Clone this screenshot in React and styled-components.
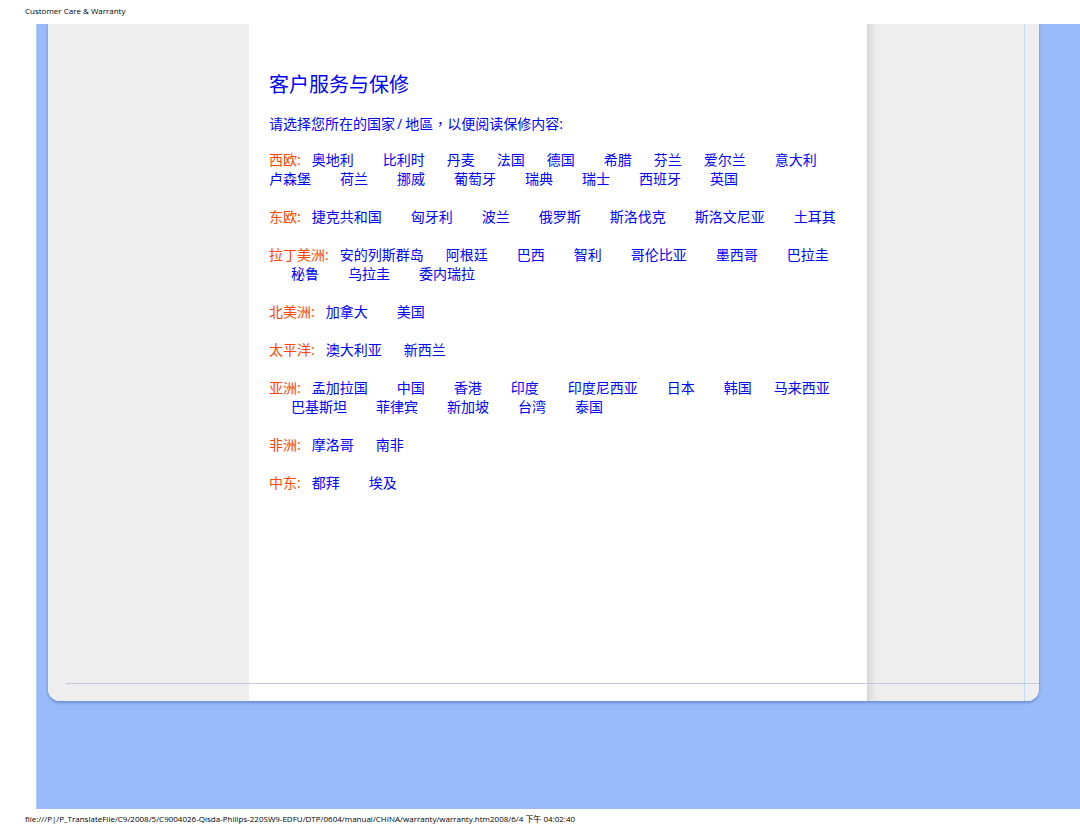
import React from 'react';
import styled, { createGlobalStyle } from 'styled-components';

const GlobalStyle = createGlobalStyle`
  * { box-sizing: border-box; }
  body {
    margin: 0;
    background: #fff;
    font-family: "Open Sans", "Noto Sans CJK SC", sans-serif;
  }
`;

const Page = styled.div`
  display: flex;
  flex-direction: column;
  min-height: 100vh;
`;

const PrintLine = styled.div`
  padding: ${(p) => (p.$foot ? '3px 25px 8px' : '4px 25px 6px')};
  font-size: 8px;
  line-height: 14px;
  color: #000;
`;

const Stage = styled.div`
  flex: 1;
  margin-left: 36px;
  padding: 0 41px 108px 11px;
  background: #99bbf9;
  border-left: 1px solid #b4c9fb;
  overflow: hidden;
`;

const Panel = styled.div`
  position: relative;
  display: grid;
  grid-template-columns: 201px minmax(0, 1fr) 157px 15px;
  min-height: 677px;
  background: #fff;
  border-radius: 0 0 12px 12px;
  box-shadow: 0 2px 3px #6f8fd6, 0 0 2px #7c9ce0;
  overflow: hidden;

  &::after {
    content: "";
    position: absolute;
    left: 18px;
    right: 0;
    bottom: 17px;
    height: 1px;
    background: #bccbe0;
  }
`;

const LeftRail = styled.div`
  background: #eee;
`;

const RightRail = styled.div`
  background: linear-gradient(to right, #d6d6d6 0, #e2e2e2 4px, #eee 10px);
`;

const RightEdge = styled.div`
  background: #eee;
  border-left: 1px solid #c2dcf8;
`;

const Content = styled.main`
  padding: 47px 20px 0;
  color: #00f;
  font-size: 14px;
  line-height: 19px;
`;

const Title = styled.h1`
  margin: 0;
  font-size: 20px;
  font-weight: 400;
  line-height: 28px;
`;

const Intro = styled.p`
  margin: 15px 0 17px;
`;

const Slash = styled.span`
  margin: 0 3px 0 2px;
`;

const Comma = styled.span`
  font-family: "Noto Sans CJK TC", sans-serif;
`;

const Region = styled.section`
  margin-bottom: 19px;
`;

const Line = styled.div`
  display: flex;
  white-space: nowrap;
  padding-left: ${(p) => (p.$indent ? '22px' : '0')};
`;

const RegionName = styled.h2`
  margin: 0 11px 0 0;
  font-size: 14px;
  font-weight: 400;
  line-height: 19px;
  color: #ff4500;
`;

const Country = styled.a`
  margin-right: ${(p) => (p.$tight ? '22px' : '29px')};
  color: #00f;
  text-decoration: none;

  &:last-child { margin-right: 0; }
`;

/* A trailing "-" marks a country followed by the narrower gap. */
const regions = [
  {
    name: '西欧',
    lines: [
      '奥地利 比利时- 丹麦- 法国- 德国 希腊- 芬兰- 爱尔兰 意大利',
      '卢森堡 荷兰 挪威 葡萄牙 瑞典 瑞士 西班牙 英国',
    ],
  },
  { name: '东欧', lines: ['捷克共和国 匈牙利 波兰 俄罗斯 斯洛伐克 斯洛文尼亚 土耳其'] },
  {
    name: '拉丁美洲',
    indent: true,
    lines: ['安的列斯群岛- 阿根廷 巴西 智利 哥伦比亚 墨西哥 巴拉圭', '秘鲁 乌拉圭 委内瑞拉'],
  },
  { name: '北美洲', lines: ['加拿大 美国'] },
  { name: '太平洋', lines: ['澳大利亚- 新西兰'] },
  {
    name: '亚洲',
    indent: true,
    lines: ['孟加拉国 中国 香港 印度 印度尼西亚 日本 韩国- 马来西亚', '巴基斯坦 菲律宾 新加坡 台湾 泰国'],
  },
  { name: '非洲', lines: ['摩洛哥- 南非'] },
  { name: '中东', lines: ['都拜 埃及'] },
];

function RegionBlock({ region }) {
  return (
    <Region>
      {region.lines.map((line, i) => (
        <Line key={line} $indent={region.indent && i > 0}>
          {i === 0 && <RegionName>{region.name}:</RegionName>}
          {line.split(' ').map((word) => {
            const label = word.replace('-', '');
            return (
              <Country key={label} href="#" $tight={word.endsWith('-')}>
                {label}
              </Country>
            );
          })}
        </Line>
      ))}
    </Region>
  );
}

export default function App() {
  return (
    <Page lang="zh-CN">
      <GlobalStyle />
      <PrintLine as="header">Customer Care &amp; Warranty</PrintLine>
      <Stage>
        <Panel>
          <LeftRail />
          <Content>
            <Title>客户服务与保修</Title>
            <Intro>
              请选择您所在的国家<Slash>/</Slash>地區<Comma lang="zh-TW">{'\uFF0C'}</Comma>以便阅读保修内容:
            </Intro>
            {regions.map((r) => (
              <RegionBlock key={r.name} region={r} />
            ))}
          </Content>
          <RightRail />
          <RightEdge />
        </Panel>
      </Stage>
      <PrintLine as="footer" $foot>
        file:///P|/P_TranslateFile/C9/2008/5/C9004026-Qisda-Philips-220SW9-EDFU/DTP/0604/manual/CHINA/warranty/warranty.htm2008/6/4 下午 04:02:40
      </PrintLine>
    </Page>
  );
}
